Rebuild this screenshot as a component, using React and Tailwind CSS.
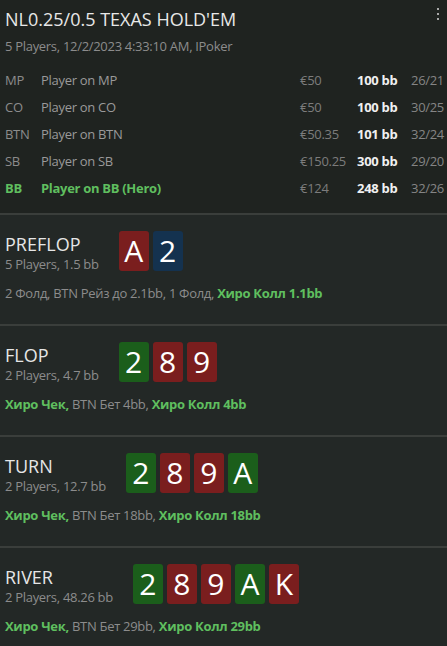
import React from 'react';

const font = { fontFamily: '"Open Sans", "Noto Sans", sans-serif' };

const players = [
  { pos: 'MP', name: 'Player on MP', money: '€50', bb: '100 bb', stats: '26/21' },
  { pos: 'CO', name: 'Player on CO', money: '€50', bb: '100 bb', stats: '30/25' },
  { pos: 'BTN', name: 'Player on BTN', money: '€50.35', bb: '101 bb', stats: '32/24' },
  { pos: 'SB', name: 'Player on SB', money: '€150.25', bb: '300 bb', stats: '29/20' },
  { pos: 'BB', name: 'Player on BB (Hero)', money: '€124', bb: '248 bb', stats: '32/26', hero: true },
];

const cardColors = {
  r: 'bg-[#7a1e1e]',
  b: 'bg-[#14324f]',
  g: 'bg-[#1b5e1b]',
};

const streets = [
  {
    name: 'PREFLOP',
    info: '5 Players, 1.5 bb',
    cards: [['A', 'r'], ['2', 'b']],
    actions: [['2 Фолд, BTN Рейз до 2.1bb, 1 Фолд, ', false], ['Хиро Колл 1.1bb', true]],
  },
  {
    name: 'FLOP',
    info: '2 Players, 4.7 bb',
    cards: [['2', 'g'], ['8', 'r'], ['9', 'r']],
    actions: [['Хиро Чек,', true], [' BTN Бет 4bb, ', false], ['Хиро Колл 4bb', true]],
  },
  {
    name: 'TURN',
    info: '2 Players, 12.7 bb',
    cards: [['2', 'g'], ['8', 'r'], ['9', 'r'], ['A', 'g']],
    actions: [['Хиро Чек,', true], [' BTN Бет 18bb, ', false], ['Хиро Колл 18bb', true]],
  },
  {
    name: 'RIVER',
    info: '2 Players, 48.26 bb',
    cards: [['2', 'g'], ['8', 'r'], ['9', 'r'], ['A', 'g'], ['K', 'r']],
    actions: [['Хиро Чек,', true], [' BTN Бет 29bb, ', false], ['Хиро Колл 29bb', true]],
  },
];

const Card = ({ value, color }) => (
  <div
    className={`w-[30px] h-[40px] rounded-[3px] flex items-center justify-center text-[30px] leading-none text-white ${cardColors[color]}`}
  >
    {value}
  </div>
);

const Street = ({ street }) => (
  <section className="border-t-2 border-[#3a3e3b] bg-[#232826] px-[5px] pt-4 pb-[22px]">
    <div className="flex items-start h-[40px]">
      {/* Street name + pot */}
      <div className="mt-[2px]">
        <div className="text-[18px] leading-[22px] text-[#e6e6e6]">{street.name}</div>
        <div className="text-[13px] leading-[18px] tracking-[-0.3px] text-[#8c8c8c]">{street.info}</div>
      </div>

      {/* Board */}
      <div className="flex gap-1 ml-5">
        {street.cards.map(([v, c], i) => (
          <Card key={i} value={v} color={c} />
        ))}
      </div>
    </div>

    <div className="mt-[13px] text-[13px] leading-[18px] tracking-[-0.3px] whitespace-nowrap">
      {street.actions.map(([text, hero], i) => (
        <span key={i} className={hero ? 'font-bold text-[#5fbf5f]' : 'text-[#8c8c8c]'}>
          {text}
        </span>
      ))}
    </div>
  </section>
);

export default function App() {
  return (
    <div style={font} className="w-[447px] h-[646px] overflow-hidden bg-[#232826]">
      {/* Header */}
      <header className="relative bg-[#1f2320] px-[5px] pt-[7px] pb-[11px] overflow-hidden">
        <div className="text-[18px] leading-6 text-[#e8e8e8]">NL0.25/0.5 TEXAS HOLD'EM</div>
        <div className="mt-[6px] text-[13px] leading-[18px] tracking-[-0.3px] text-[#8c8c8c]">
          5 Players, 12/2/2023 4:33:10 AM, IPoker
        </div>

        <div className="absolute right-[8px] top-[8px] flex flex-col gap-[3px]">
          <span className="w-[2px] h-[2px] bg-[#a8a8a8]" />
          <span className="w-[2px] h-[2px] bg-[#a8a8a8]" />
          <span className="w-[2px] h-[2px] bg-[#a8a8a8]" />
        </div>

        <div className="mt-[12px] grid grid-cols-[36px_259px_57px_54px_60px] whitespace-nowrap text-[13px] tracking-[-0.3px]">
          {players.map((p) => (
            <React.Fragment key={p.pos}>
              <div className={`h-[27px] leading-[27px] ${p.hero ? 'font-bold text-[#5fbf5f]' : 'text-[#8c8c8c]'}`}>
                {p.pos}
              </div>
              <div className={`h-[27px] leading-[27px] ${p.hero ? 'font-bold text-[#5fbf5f]' : 'text-[#9a9a9a]'}`}>
                {p.name}
              </div>
              <div className="h-[27px] leading-[27px] text-[#7c7c7c]">{p.money}</div>
              <div className="h-[27px] leading-[27px] font-bold text-[#f0f0f0]">{p.bb}</div>
              <div className="h-[27px] leading-[27px] text-[#858585]">{p.stats}</div>
            </React.Fragment>
          ))}
        </div>
      </header>

      {streets.map((s) => (
        <Street key={s.name} street={s} />
      ))}
    </div>
  );
}
